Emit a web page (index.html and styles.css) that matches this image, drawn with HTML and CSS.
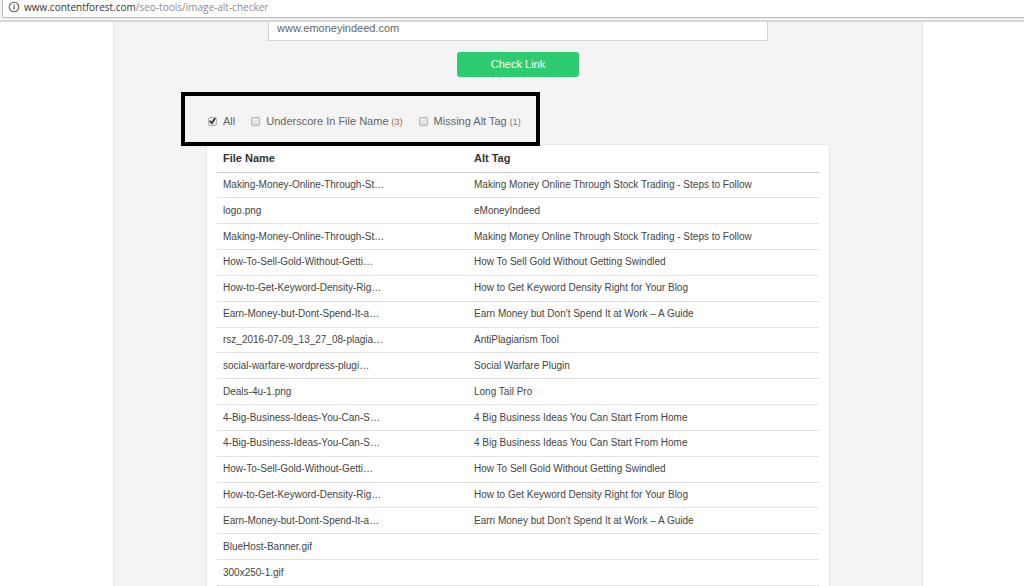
FILE: index.html
```html
<!DOCTYPE html>
<html lang="en">
<head>
<meta charset="utf-8">
<title>Image Alt Checker</title>
<link rel="stylesheet" href="styles.css">
</head>
<body>
<header class="toolbar">
  <div class="address">
    <svg class="info" viewBox="0 0 12 12" aria-hidden="true"><circle cx="6" cy="6" r="4.8" fill="none" stroke="#5a5a5a" stroke-width="1.1"/><path d="M6 5.3v3.3M6 3.2v1.2" stroke="#5a5a5a" stroke-width="1.3"/></svg>
    <span class="url">www.contentforest.com<span class="path">/seo-tools/image-alt-checker</span></span>
  </div>
</header>
<main class="page">
  <div class="content">
    <form class="check-form">
      <input class="link-input" type="text" aria-label="Website link" value="www.emoneyindeed.com">
      <button class="check-button" type="button">Check Link</button>
    </form>
    <div class="results">
      <div class="filters">
        <label class="filter"><input class="tick" type="checkbox" checked>All</label>
        <label class="filter"><input class="tick" type="checkbox"><span>Underscore In File Name <span class="count red">(3)</span></span></label>
        <label class="filter"><input class="tick" type="checkbox"><span>Missing Alt Tag <span class="count">(1)</span></span></label>
      </div>
      <div class="panel">
        <table class="images">
          <thead><tr><th class="file">File Name</th><th>Alt Tag</th></tr></thead>
          <tbody>
            <tr><td>Making-Money-Online-Through-St…</td><td>Making Money Online Through Stock Trading - Steps to Follow</td></tr>
            <tr><td>logo.png</td><td>eMoneyIndeed</td></tr>
            <tr><td>Making-Money-Online-Through-St…</td><td>Making Money Online Through Stock Trading - Steps to Follow</td></tr>
            <tr><td>How-To-Sell-Gold-Without-Getti…</td><td>How To Sell Gold Without Getting Swindled</td></tr>
            <tr><td>How-to-Get-Keyword-Density-Rig…</td><td>How to Get Keyword Density Right for Your Blog</td></tr>
            <tr><td>Earn-Money-but-Dont-Spend-It-a…</td><td>Earn Money but Don't Spend It at Work – A Guide</td></tr>
            <tr><td>rsz_2016-07-09_13_27_08-plagia…</td><td>AntiPlagiarism Tool</td></tr>
            <tr><td>social-warfare-wordpress-plugi…</td><td>Social Warfare Plugin</td></tr>
            <tr><td>Deals-4u-1.png</td><td>Long Tail Pro</td></tr>
            <tr><td>4-Big-Business-Ideas-You-Can-S…</td><td>4 Big Business Ideas You Can Start From Home</td></tr>
            <tr><td>4-Big-Business-Ideas-You-Can-S…</td><td>4 Big Business Ideas You Can Start From Home</td></tr>
            <tr><td>How-To-Sell-Gold-Without-Getti…</td><td>How To Sell Gold Without Getting Swindled</td></tr>
            <tr><td>How-to-Get-Keyword-Density-Rig…</td><td>How to Get Keyword Density Right for Your Blog</td></tr>
            <tr><td>Earn-Money-but-Dont-Spend-It-a…</td><td>Earn Money but Don't Spend It at Work – A Guide</td></tr>
            <tr><td>BlueHost-Banner.gif</td><td></td></tr>
            <tr><td>300x250-1.gif</td><td></td></tr>
          </tbody>
        </table>
      </div>
    </div>
  </div>
</main>
</body>
</html>
```

FILE: styles.css
```css
* { box-sizing: border-box; }
body {
  margin: 0;
  height: 100vh;
  overflow: hidden;
  display: flex;
  flex-direction: column;
  background: #fff;
  color: #444;
  font: 10px/14px "Liberation Sans", Arial, sans-serif;
}
.toolbar {
  flex: none;
  background: #f2f2f2;
  border-bottom: 2px solid #d8d8d8;
  padding: 0 0 2px 2px;
}
.address {
  display: flex;
  align-items: center;
  gap: 4px;
  height: 18px;
  padding: 0 5px 3px;
  background: #fff;
  border: 1px solid #b8b8b8;
  border-top: 0;
  border-right: 0;
  border-radius: 0 0 0 2px;
}
.info { width: 12px; height: 12px; }
.url { font: 10px/14px "Open Sans", sans-serif; color: #333; }
.path { color: #8c8c8c; }
.page { flex: 1; min-height: 0; overflow: hidden; padding-left: 12px; }
.content {
  max-width: 810px;
  margin: 0 auto;
  min-height: 100%;
  background: #f4f4f4;
  border: solid #e8e8e8;
  border-width: 0 1px;
}
.check-form { display: flex; flex-direction: column; align-items: center; }
.link-input {
  width: 500px;
  max-width: 100%;
  height: 27px;
  margin-top: -8px;
  padding: 0 8px;
  border: 1px solid #d4d4d4;
  background: #fff;
  color: #666;
  font: 11px/14px "Liberation Sans", Arial, sans-serif;
}
.check-button {
  width: 122px;
  height: 25px;
  margin-top: 11px;
  padding: 0 0 2px;
  border: 0;
  border-radius: 3px;
  background: #2ecc71;
  color: #fff;
  font: 11px/14px "Liberation Sans", Arial, sans-serif;
}
.results { max-width: 624px; margin: 15px auto 0; }
.filters {
  position: relative;
  z-index: 1;
  display: flex;
  align-items: center;
  gap: 16px;
  width: 359px;
  height: 54px;
  margin: 0 0 -2px -25px;
  padding: 4px 0 0 23px;
  border: 4px solid #000;
  font-size: 11px;
  color: #666;
  white-space: nowrap;
}
.filter { display: flex; align-items: center; gap: 6px; }
.tick {
  appearance: none;
  display: grid;
  place-content: center;
  width: 9px;
  height: 9px;
  margin: 0;
  border: 1px solid #b0b0b0;
  border-radius: 2px;
  background: linear-gradient(#f0f0f0, #dcdcdc);
}
.tick:checked::before {
  content: "";
  width: 7px;
  height: 7px;
  background: #333;
  clip-path: polygon(0 55%, 20% 38%, 38% 60%, 80% 0, 100% 14%, 42% 100%);
}
.count { font-size: 9px; color: #887570; }
.red { color: #b5654a; }
.panel {
  padding: 0 10px 20px;
  background: #fff;
  border: 1px solid #e8e8e8;
  border-radius: 2px;
}
.images { width: 100%; height: 441px; border-collapse: collapse; table-layout: fixed; }
.images th, .images td { padding: 0 6px; text-align: left; vertical-align: middle; border-bottom: 1px solid #e2e2e2; }
.images th { height: 27px; border-bottom-color: #ccc; color: #333; font-size: 11px; }
.file { width: 251px; }
```
